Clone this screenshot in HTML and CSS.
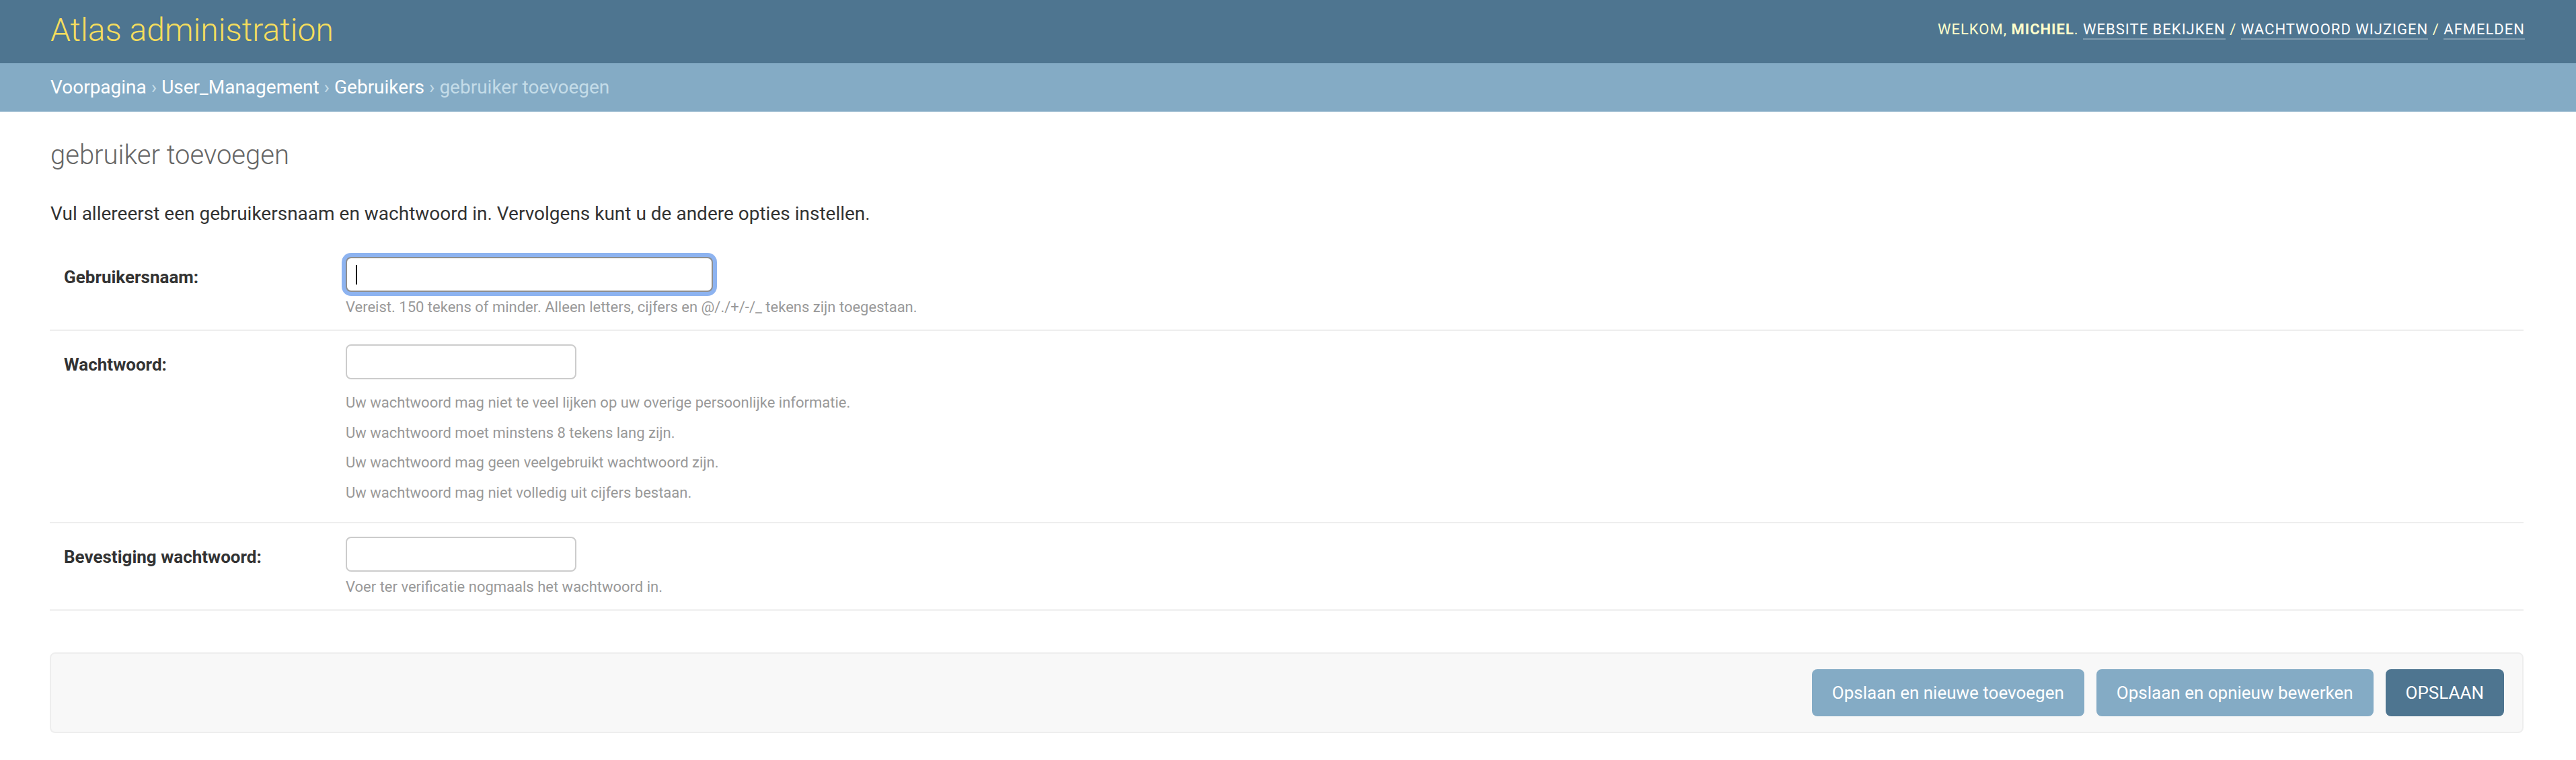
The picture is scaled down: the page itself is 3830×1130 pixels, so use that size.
FILE: index.html
```html
<!DOCTYPE html>
<html lang="nl">
<head>
<meta charset="utf-8">
<title>gebruiker toevoegen | Atlas administration</title>
<link rel="stylesheet" href="styles.css">
</head>
<body>
<header class="header">
  <div class="branding"><h1 class="site-name">Atlas administration</h1></div>
  <div class="user-tools">Welkom, <strong class="user-name">Michiel</strong>. <a class="tool-link" href="#">Website bekijken</a> / <a class="tool-link" href="#">Wachtwoord wijzigen</a> / <a class="tool-link" href="#">Afmelden</a></div>
</header>
<nav class="breadcrumbs"><a class="crumb" href="#">Voorpagina</a> › <a class="crumb" href="#">User_Management</a> › <a class="crumb" href="#">Gebruikers</a> › gebruiker toevoegen</nav>
<main class="content">
  <h1 class="page-title">gebruiker toevoegen</h1>
  <p class="intro">Vul allereerst een gebruikersnaam en wachtwoord in. Vervolgens kunt u de andere opties instellen.</p>
  <div class="fieldset">
    <div class="form-row">
      <label class="field-label">Gebruikersnaam:</label>
      <div class="field">
        <div class="text-input input-wide is-focused"><span class="caret"></span></div>
        <div class="help">Vereist. 150 tekens of minder. Alleen letters, cijfers en @/./+/-/_ tekens zijn toegestaan.</div>
      </div>
    </div>
    <div class="form-row">
      <label class="field-label">Wachtwoord:</label>
      <div class="field">
        <div class="text-input input-short"></div>
        <ul class="help-list">
          <li class="help-item">Uw wachtwoord mag niet te veel lijken op uw overige persoonlijke informatie.</li>
          <li class="help-item">Uw wachtwoord moet minstens 8 tekens lang zijn.</li>
          <li class="help-item">Uw wachtwoord mag geen veelgebruikt wachtwoord zijn.</li>
          <li class="help-item">Uw wachtwoord mag niet volledig uit cijfers bestaan.</li>
        </ul>
      </div>
    </div>
    <div class="form-row">
      <label class="field-label">Bevestiging wachtwoord:</label>
      <div class="field">
        <div class="text-input input-short"></div>
        <div class="help">Voer ter verificatie nogmaals het wachtwoord in.</div>
      </div>
    </div>
  </div>
  <div class="submit-row">
    <button class="btn" type="button">Opslaan en nieuwe toevoegen</button>
    <button class="btn" type="button">Opslaan en opnieuw bewerken</button>
    <button class="btn btn-default" type="button">OPSLAAN</button>
  </div>
</main>
</body>
</html>
```
FILE: styles.css
```css
html, body {
  margin: 0;
  padding: 0;
  background: #ffffff;
}
body {
  font-family: Roboto, "Liberation Sans", sans-serif;
  color: #333333;
}
.header {
  height: 94px;
  box-sizing: border-box;
  padding: 0 76px 0 75px;
  background: #4e7590;
  display: flex;
  align-items: center;
  justify-content: space-between;
}
.site-name {
  margin: 0;
  font-size: 48px;
  font-weight: 300;
  line-height: 56px;
  color: #f5dd5d;
  position: relative;
  top: -2px;
}
.user-tools {
  font-size: 22px;
  line-height: 26px;
  letter-spacing: 1px;
  text-transform: uppercase;
  color: #ffffcc;
  position: relative;
  top: -3px;
}
.user-name {
  font-weight: 700;
}
.tool-link {
  color: #ffffff;
  text-decoration: none;
  border-bottom: 2px solid rgba(255, 255, 255, 0.28);
  padding-bottom: 1px;
}
.breadcrumbs {
  height: 72px;
  box-sizing: border-box;
  padding: 0 75px;
  background: #84abc5;
  color: #c4dce8;
  font-size: 28px;
  line-height: 72px;
}
.crumb {
  color: #ffffff;
  text-decoration: none;
}
.content {
  padding: 41px 78px 40px 74px;
}
.page-title {
  margin: 0 0 0 1px;
  font-size: 40px;
  font-weight: 300;
  line-height: 48px;
  color: #666666;
}
.intro {
  margin: 43px 0 24px 1px;
  font-size: 28px;
  line-height: 40px;
  color: #333333;
}
.form-row {
  display: flex;
  padding: 20px 20px 20px 21px;
  border-bottom: 2px solid #eeeeee;
}
.field-label {
  flex: 0 0 419px;
  box-sizing: border-box;
  padding-top: 17px;
  font-size: 26px;
  line-height: 26px;
  font-weight: 700;
  color: #333333;
}
.field {
  display: flex;
  flex-direction: column;
  align-items: flex-start;
}
.text-input {
  height: 52px;
  box-sizing: border-box;
  border: 2px solid #cccccc;
  border-radius: 8px;
  background: #ffffff;
  display: flex;
  align-items: center;
  padding-left: 13px;
}
.input-wide {
  width: 546px;
}
.input-short {
  width: 343px;
}
.is-focused {
  border-color: #8e8e8e;
  box-shadow: 0 0 0 6px #8db3f0;
}
.caret {
  display: block;
  width: 2px;
  height: 29px;
  background: #000000;
}
.help {
  margin-top: 10px;
  font-size: 22px;
  line-height: 26px;
  color: #999999;
}
.help-list {
  margin: 13px 0 0 0;
  padding: 0;
  list-style: none;
}
.help-item {
  padding: 9px 0;
  font-size: 22px;
  line-height: 26.7px;
  color: #999999;
}
.submit-row {
  margin-top: 62px;
  display: flex;
  justify-content: flex-end;
  gap: 18px;
  padding: 23px 27px;
  background: #f8f8f8;
  border: 2px solid #eeeeee;
  border-radius: 8px;
}
.btn {
  height: 70px;
  padding: 0 30px;
  border: none;
  border-radius: 8px;
  background: #84abc5;
  color: #ffffff;
  font-family: Roboto, "Liberation Sans", sans-serif;
  font-size: 26px;
  cursor: pointer;
}
.btn-default {
  background: #4e7590;
}
```
